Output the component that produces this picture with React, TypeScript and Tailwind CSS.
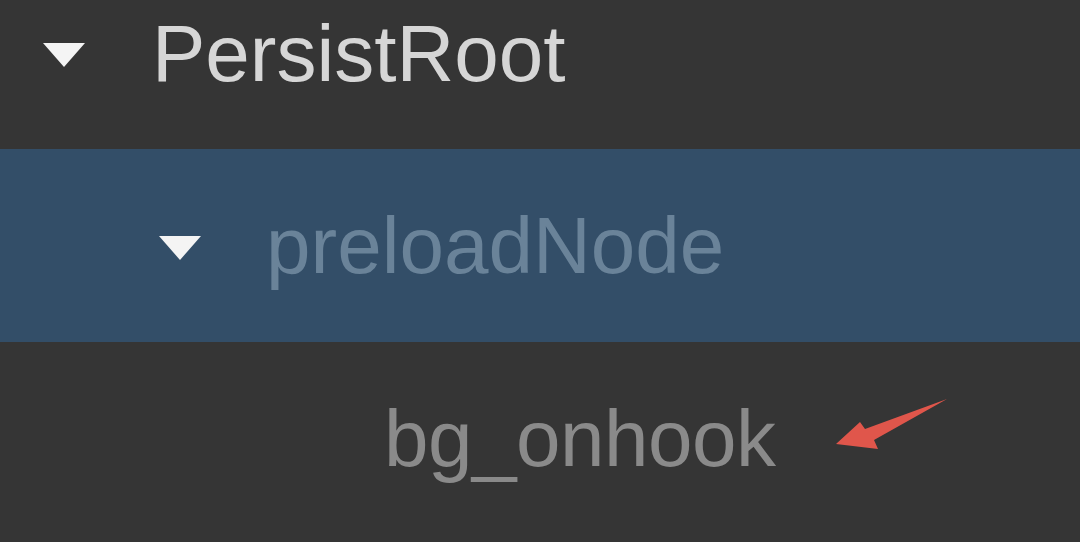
import React from "react";

function Tri() {
  return (
    <svg width="44" height="26" viewBox="0 0 44 26" className="shrink-0">
      <polygon points="1,1 43,1 22,25" fill="#f4f4f4" />
    </svg>
  );
}

export default function App() {
  const font = { fontFamily: '"Liberation Sans", Arial, sans-serif' };
  return (
    <div className="relative w-[1080px] h-[542px] bg-[#353535] overflow-hidden" style={font}>
      <div className="flex flex-col mt-[-44px]">
        <div className="h-[193px] flex items-center pl-[42px]">
          <div className="mt-[5px]"><Tri /></div>
          <span className="ml-[66px] mt-[2px] text-[80px] leading-[80px] text-[#d6d6d6]">PersistRoot</span>
        </div>
        <div className="h-[193px] flex items-center pl-[158px] bg-[#334e68]">
          <div className="mt-[5px]"><Tri /></div>
          <span className="ml-[64px] text-[80px] leading-[80px] text-[#6a8399]">preloadNode</span>
        </div>
        <div className="relative h-[193px] flex items-center pl-[384px]">
          <span className="text-[80px] leading-[80px] text-[#8a8a8a] tracking-[-0.5px]">bg_onhook</span>
          <svg className="absolute left-0 top-0" width="1080" height="193" viewBox="0 343 1080 193">
            <polygon
              points="836,445 860,423 865,430 947,400 874,441 878,450"
              fill="#e0564b"
            />
          </svg>
        </div>
      </div>
    </div>
  );
}
